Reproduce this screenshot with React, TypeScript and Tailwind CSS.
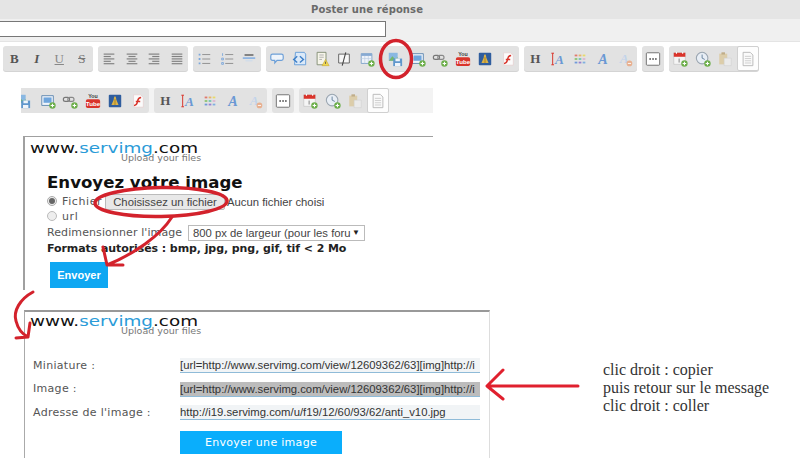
import React from 'react';

const sans = "font-['DejaVu_Sans',sans-serif]";
const arial = "font-['Liberation_Sans',sans-serif]";

// all toolbar glyphs, drawn on a 18x18 box
const Icon = ({ name }: { name: string }) => {
  const plus = (
    <g>
      <circle cx="14" cy="14" r="3.6" fill="#6cae4a" />
      <path d="M14 12v4M12 14h4" stroke="#fff" strokeWidth="1.2" />
    </g>
  );
  const lines = (rows: number[][]) => (
    <g stroke="#808080" strokeWidth="1.3">
      {rows.map((r, i) => (
        <path key={i} d={`M${r[0]} ${3.5 + i * 2.7}H${r[1]}`} />
      ))}
    </g>
  );
  let inner: React.ReactNode = null;
  switch (name) {
    case 'alignL':
      inner = lines([[3, 15], [3, 11], [3, 15], [3, 11], [3, 15]]);
      break;
    case 'alignC':
      inner = lines([[3, 15], [5, 13], [3, 15], [5, 13], [3, 15]]);
      break;
    case 'alignR':
      inner = lines([[3, 15], [7, 15], [3, 15], [7, 15], [3, 15]]);
      break;
    case 'alignJ':
      inner = lines([[3, 15], [3, 15], [3, 15], [3, 15], [3, 15]]);
      break;
    case 'ul':
    case 'ol':
      inner = (
        <g>
          <path d="M7 4h9M7 9h9M7 14h9" stroke="#8a8a8a" strokeWidth="1" />
          {name === 'ul' ? (
            <path d="M3 3h2v2H3zM3 8h2v2H3zM3 13h2v2H3z" fill="#7ba7dc" />
          ) : (
            <path d="M4 2.5v3M3 8h2v2H3zM3 13h2v2H3z" stroke="#7ba7dc" strokeWidth="1" fill="none" />
          )}
        </g>
      );
      break;
    case 'hr':
      inner = (
        <g>
          <path d="M4 4.500h10" stroke="#777" strokeWidth="2" />
          <path d="M2 8h14" stroke="#8fb5e2" strokeWidth="2" />
          <path d="M5 11h8" stroke="#d0dcea" strokeWidth="1.500" />
        </g>
      );
      break;
    case 'quote':
      inner = (
        <path d="M4 3.500h10q2 0 2 2v3q0 2-2 2H9l-2.500 3v-3H4q-2 0-2-2v-3q0-2 2-2z" fill="#eef4fb" stroke="#6c9fd8" strokeWidth="1.300" />
      );
      break;
    case 'code':
      inner = (
        <g>
          <path d="M5 1.500h10l1.500 2v12H4z" fill="#dbe9f8" stroke="#5f9ad8" />
          <path d="M7 6 3 9.500 7 13M10 6l4 3.500-4 3.500" fill="none" stroke="#3f80c8" strokeWidth="1.600" />
        </g>
      );
      break;
    case 'warn':
      inner = (
        <g>
          <path d="M3.500 1.500h10v14h-10z" fill="#f6f5ea" stroke="#7d8a70" />
          <path d="M6 4.500h5M6 7h5M6 9.500h3" stroke="#aaa" />
          <path d="M13 9.500 17 16.500H9z" fill="#f2d84f" stroke="#c0a52a" strokeWidth=".6" />
          <path d="M13 12v2.500" stroke="#555" />
        </g>
      );
      break;
    case 'spoiler':
      inner = (
        <g>
          <path d="M3 3.500h12v10H3z" fill="#f7f7f7" stroke="#666" strokeWidth="1.100" />
          <path d="M11 1.500 7 16.500" stroke="#444" strokeWidth="1.200" />
        </g>
      );
      break;
    case 'table':
      inner = (
        <g>
          <path d="M2.500 3h12v11h-12z" fill="#eef3fa" stroke="#7ba0c8" />
          <path d="M2.500 3h12v2.500h-12z" fill="#86a9d2" />
          <path d="M2.500 8.500h12M6.500 5.500V14M10.500 5.500V14" stroke="#b9cbe0" strokeWidth=".7" />
          {plus}
        </g>
      );
      break;
    case 'upload':
      inner = (
        <g>
          <path d="M2 2h10v9H2z" fill="#8ab8e2" />
          <path d="M2 11 6 6l3 3 3-2v4z" fill="#74b86c" />
          <path d="M7 8.500h10V17H7z" fill="#5f97cc" />
          <path d="M9.500 8.500h5v3h-5zM9 13.500h6V17H9z" fill="#eef4fa" />
        </g>
      );
      break;
    case 'pic':
      inner = (
        <g>
          <path d="M2 3h13v11H2z" fill="#eef3fa" stroke="#5b85ae" />
          <path d="M4 5h9v6H4z" fill="#6fa5dc" />
          {plus}
        </g>
      );
      break;
    case 'link':
      inner = (
        <g>
          <rect x="1.500" y="5" width="7" height="4.500" rx="2.200" fill="none" stroke="#777" strokeWidth="1.300" />
          <rect x="6.500" y="5" width="7" height="4.500" rx="2.200" fill="none" stroke="#888" strokeWidth="1.300" />
          {plus}
        </g>
      );
      break;
    case 'youtube':
      inner = (
        <g>
          <text x="9" y="6" textAnchor="middle" fontSize="6" fontWeight="700" fill="#444" fontFamily="Liberation Sans">You</text>
          <rect x="1" y="7" width="16" height="10" rx="2" fill="#d9342b" />
          <text x="9" y="14.500" textAnchor="middle" fontSize="7" fontWeight="700" fill="#fff" fontFamily="Liberation Sans">Tube</text>
        </g>
      );
      break;
    case 'box':
      inner = (
        <g>
          <rect x="2" y="2" width="14" height="14" rx="1" fill="#2f5d9e" />
          <path d="M9 3.500q1.500 1.500 1.500 4l2.500 6H5l2.500-6q0-2.500 1.500-4z" fill="#d9b24a" />
          <path d="M9 7v6.500" stroke="#a87f1c" />
        </g>
      );
      break;
    case 'flash':
      inner = (
        <g>
          <path d="M4 2h8l3 3v11H4z" fill="#fbfbfb" stroke="#e6d4d4" />
          <path d="M12.500 5C9 5 9 7 8.500 9.500S7 14 4.500 14M6.500 9.500h5" fill="none" stroke="#d9342b" strokeWidth="1.700" />
        </g>
      );
      break;
    case 'fontA':
      inner = (
        <g>
          <text x="10.500" y="14.500" textAnchor="middle" fontSize="15" fontWeight="700" fontStyle="italic" fill="#6a98d4" fontFamily="Liberation Serif">A</text>
          <path d="M3 2.500v13M1.500 2.500h3M1.500 15.500h3" stroke="#d9342b" strokeWidth="1.100" />
        </g>
      );
      break;
    case 'palette':
      inner = (
        <g>
          <path d="M3 4h3v2H3z" fill="#e07a6e" />
          <path d="M7.500 4h3v2h-3z" fill="#e8b46a" />
          <path d="M12 4h3v2h-3z" fill="#e8da6a" />
          <path d="M3 8h3v2H3z" fill="#8cc470" />
          <path d="M7.500 8h3v2h-3z" fill="#70c4b4" />
          <path d="M12 8h3v2h-3z" fill="#dcb4d0" />
          <path d="M3 12h3v2H3z" fill="#709ada" />
          <path d="M7.500 12h3v2h-3z" fill="#9a80d0" />
          <path d="M12 12h3v2h-3z" fill="#80b0e0" />
        </g>
      );
      break;
    case 'italicA':
      inner = (
        <text x="9" y="15" textAnchor="middle" fontSize="16" fontWeight="700" fontStyle="italic" fill="#6a98d4" fontFamily="Liberation Serif">A</text>
      );
      break;
    case 'fadedA':
      inner = (
        <g>
          <text x="8" y="14" textAnchor="middle" fontSize="15" fontWeight="700" fontStyle="italic" fill="#c2d4ea" fontFamily="Liberation Serif">A</text>
          <circle cx="14" cy="14" r="3.200" fill="#e8b090" />
          <path d="M12.200 14h3.600" stroke="#fff" />
        </g>
      );
      break;
    case 'dots':
      inner = (
        <g>
          <rect x="1.500" y="2" width="15" height="14" rx="1" fill="#fff" stroke="#666" />
          <path d="M5 9h1.500M8.300 9h1.500M11.500 9H13" stroke="#222" strokeWidth="1.500" />
        </g>
      );
      break;
    case 'calendar':
      inner = (
        <g>
          <path d="M2 2h13v13H2z" fill="#f5f5f5" stroke="#bbb" strokeWidth=".6" />
          <path d="M2 2h13v4.500H2z" fill="#d9342b" />
          <path d="M5 1v2M12 1v2" stroke="#fff" strokeWidth="1.200" />
          <path d="M8 8.500V13" stroke="#777" />
          {plus}
        </g>
      );
      break;
    case 'clock':
      inner = (
        <g>
          <circle cx="8" cy="8" r="6.500" fill="#e8eef5" stroke="#9aa5b0" strokeWidth="1.200" />
          <path d="M8 4v4l3 1.500" fill="none" stroke="#5f7b98" />
          {plus}
        </g>
      );
      break;
    case 'paste':
      inner = (
        <g>
          <path d="M2.500 3h9v12h-9z" fill="#dccdaa" />
          <path d="M5 1.500h4V4H5z" fill="#c0ad88" />
          <path d="M8 8h8v8.500H8z" fill="#eaeaea" stroke="#ccc" strokeWidth=".6" />
        </g>
      );
      break;
    case 'doc':
      inner = (
        <g>
          <path d="M3.500 1.500h8l3 3v12h-11z" fill="#fafafa" stroke="#b4b4b4" />
          <path d="M5.500 6h7M5.500 8.500h7M5.500 11h7M5.500 13.500h7" stroke="#cacaca" />
        </g>
      );
      break;
  }
  return (
    <svg width="16" height="16" viewBox="0 0 18 18">
      {inner}
    </svg>
  );
};

const letterClass: Record<string, string> = {
  B: 'font-bold',
  I: 'font-bold italic',
  U: 'underline font-normal text-[#888]',
  S: 'line-through font-normal text-[#777]',
  H: 'font-bold',
};

const ToolButton = ({ name }: { name: string }) => {
  const isLetter = name.length === 1;
  return (
    <div
      className={`w-[22.5px] h-full flex items-center justify-center shrink-0 ${
        name === 'upload' ? 'ml-[6px]' : ''
      } ${name === 'doc' ? 'bg-[#fdfdfd] border border-[#d0d0d0] rounded-[2px]' : ''}`}
    >
      {isLetter ? (
        <span className={`font-['Liberation_Serif',serif] text-[13px] text-[#555] ${letterClass[name]}`}>{name}</span>
      ) : (
        <Icon name={name} />
      )}
    </div>
  );
};

const Toolbar = ({ groups, className }: { groups: string[][]; className?: string }) => (
  <div className={`flex gap-[5px] h-[25px] ${className ?? ''}`}>
    {groups.map((g, i) => (
      <div key={i} className="flex h-full bg-[#e2e2e2] rounded-[3px] shadow-[0_1px_0_#d4d4d4] shrink-0">
        {g.map((n) => (
          <ToolButton key={n} name={n} />
        ))}
      </div>
    ))}
  </div>
);

const GROUPS_TAIL = [
  ['H', 'fontA', 'palette', 'italicA', 'fadedA'],
  ['dots'],
  ['calendar', 'clock', 'paste', 'doc'],
];

const GROUPS_FULL = [
  ['B', 'I', 'U', 'S'],
  ['alignL', 'alignC', 'alignR', 'alignJ'],
  ['ul', 'ol', 'hr'],
  ['quote', 'code', 'warn', 'spoiler', 'table', 'upload', 'pic', 'link', 'youtube', 'box', 'flash'],
  ...GROUPS_TAIL,
];

const GROUPS_CROP = [['crop', 'pic', 'link', 'youtube', 'box', 'flash'], ...GROUPS_TAIL];

const Logo = () => (
  <div className="h-[22px] w-[180px]">
    <div className={`${sans} text-[14px] leading-[10px] text-[#111] origin-left scale-x-[1.31] whitespace-nowrap`}>
      www.<span className="text-[#2a9bd8]">servimg</span>.com
    </div>
    <div className={`${sans} -mt-[1px] text-[9.5px] leading-[11px] text-[#777] ml-[91px] whitespace-nowrap`}>Upload your files</div>
  </div>
);

const UrlRow = ({ label, value, selected }: { label: string; value: string; selected?: boolean }) => (
  <div className="flex items-center h-[23.5px]">
    <div className={`${sans} w-[147px] text-[11px] text-[#555] tracking-[0.3px] whitespace-nowrap`}>{label}</div>
    <div
      className={`${arial} w-[300px] h-[15px] whitespace-nowrap text-[11.3px] leading-[14px] text-[#333] border-b border-[#8fbbd8] ${
        selected ? 'bg-[#bcbcbc]' : 'bg-[#f1f4f6]'
      }`}
    >
      {value}
    </div>
  </div>
);

const Annotations = () => (
  <svg className="absolute inset-0 pointer-events-none" width="800" height="458" viewBox="0 0 800 458" fill="none" stroke="#d3222c" strokeLinecap="round" strokeLinejoin="round">
    {/* circled button in the toolbar */}
    <ellipse cx="396" cy="59" rx="15.500" ry="18.500" strokeWidth="3.500" />
    {/* circled file button and arrow down to Envoyer */}
    <ellipse cx="161" cy="202" rx="66" ry="14.500" strokeWidth="3.500" transform="rotate(-1 161 202)" />
    <path d="M172 217C160 236 134 254 107 265M103 247 107 265 123 265" strokeWidth="3" />
    {/* curved arrow to the second panel */}
    <path d="M33 292C20 299 13 311 16 321 18 329 22 334 28 337M30 323 28 337 16 338" strokeWidth="3" />
    {/* arrow to the selected field */}
    <path d="M578 386H488M503 370 487 386 503 399" strokeWidth="3" stroke="#e0202e" />
  </svg>
);

export default function App() {
  return (
    <div className="relative w-[800px] h-[458px] overflow-hidden bg-white">
      {/* header */}
      <div className={`${sans} h-[19px] bg-[#e5e5e5] pr-[66px] text-center text-[10px] leading-[20px] font-bold text-[#6a6a6a] tracking-[0.1px]`}>
        Poster une réponse
      </div>
      <div className="h-[23px] bg-[#f0f0f0] pt-[2px] border-b border-[#e4e4e4]">
        <div className="w-[386px] h-[16px] bg-white border border-[#777] border-l-0" />
      </div>

      <Toolbar groups={GROUPS_FULL} className="mt-[4px] ml-[3px]" />

      {/* cropped copy of the toolbar */}
      <div className="mt-[17px] ml-[21px] w-[412px] h-[25px] bg-[#f3f3f3] overflow-hidden">
        <div className="flex gap-[5px] h-full -ml-[9px]">
          {GROUPS_CROP.map((g, i) => (
            <div key={i} className="flex h-full bg-[#e2e2e2] rounded-[3px] shrink-0">
              {g.map((n) =>
                n === 'crop' ? (
                  <div key={n} className="w-[24.5px] h-full flex items-center justify-center shrink-0 pr-[2px]">
                    <Icon name="upload" />
                  </div>
                ) : (
                  <ToolButton key={n} name={n} />
                )
              )}
            </div>
          ))}
        </div>
      </div>

      {/* first upload panel */}
      <div className="mt-[23px] ml-[23px] w-[410px] h-[154px] border-t border-l-2 border-[#a0a0a0] pt-[6px] pl-[5px]">
        <Logo />
        <div className="pl-[17px] mt-[7px]">
          <h2 className={`${sans} text-[16.6px] leading-[22px] font-bold text-[#111] whitespace-nowrap`}>Envoyez votre image</h2>
          <div className={`${sans} flex items-center h-[16px] text-[11px] text-[#555]`}>
            <span className="w-[10px] h-[10px] -mt-[3px] rounded-full border border-[#aaa] bg-[#eee] flex items-center justify-center">
              <span className="w-[6px] h-[6px] rounded-full bg-[#666]" />
            </span>
            <span className="ml-[5px] w-[43px] tracking-[0.6px]">Fichier</span>
            <span className={`${arial} w-[120px] h-[16px] text-center text-[11.3px] leading-[15px] whitespace-nowrap bg-[#e8e8e8] border border-[#bbb] rounded-[2px] text-[#444]`}>
              Choisissez un fichier
            </span>
            <span className={`${arial} ml-[2px] text-[11.3px] whitespace-nowrap text-[#444]`}>Aucun fichier choisi</span>
          </div>
          <div className={`${sans} flex items-center h-[15px] text-[11px] text-[#555]`}>
            <span className="w-[10px] h-[10px] -mt-[3px] rounded-full border border-[#bbb] bg-[#eee]" />
            <span className="ml-[5px] tracking-[0.6px]">url</span>
          </div>
          <div className="flex items-center h-[16px]">
            <span className={`${sans} text-[11px] text-[#555] tracking-[0.1px] whitespace-nowrap w-[141px]`}>Redimensionner l'image</span>
            <div className={`${arial} w-[177px] h-[16px] flex items-center justify-between px-[4px] border border-[#bbb] text-[11.3px] text-[#444] whitespace-nowrap`}>
              800 px de largeur (pour les foru
              <span className="text-[8px] text-[#222]">▼</span>
            </div>
          </div>
          <div className={`${sans} text-[11px] leading-[15px] font-bold text-[#222] tracking-[-0.08px] whitespace-nowrap`}>
            Formats autorisés : bmp, jpg, png, gif, tif &lt; 2 Mo
          </div>
          <div className={`${arial} mt-[6px] ml-[3px] w-[58px] h-[26px] bg-[#0ea7f2] text-white text-[11px] font-bold leading-[26px] text-center`}>
            Envoyer
          </div>
        </div>
      </div>

      {/* second panel and the note beside it */}
      <div className="flex mt-[20px] ml-[24px]">
        <div className="w-[466px] h-[148px] shrink-0 border-t-2 border-t-[#999] border-l border-l-[#aaa] border-r border-r-[#ddd] pt-[4px] pl-[5px]">
          <Logo />
          <div className="pl-[3px] mt-[16px]">
            <UrlRow label="Miniature :" value="[url=http://www.servimg.com/view/12609362/63][img]http://i" />
            <UrlRow label="Image :" value="[url=http://www.servimg.com/view/12609362/63][img]http://i" selected />
            <UrlRow label="Adresse de l'image :" value="http://i19.servimg.com/u/f19/12/60/93/62/anti_v10.jpg" />
            <div className={`${sans} mt-[6px] ml-[147px] w-[162px] h-[23px] bg-[#0aaefc] text-white text-[11px] tracking-[0.3px] leading-[23px] text-center`}>
              Envoyer une image
            </div>
          </div>
        </div>
        <div className="ml-[113px] mt-[51px] font-['Liberation_Serif',serif] text-[16px] leading-[18px] text-[#333] whitespace-nowrap">
          <div>clic droit : copier</div>
          <div>puis retour sur le message</div>
          <div>clic droit : coller</div>
        </div>
      </div>

      <Annotations />
    </div>
  );
}
